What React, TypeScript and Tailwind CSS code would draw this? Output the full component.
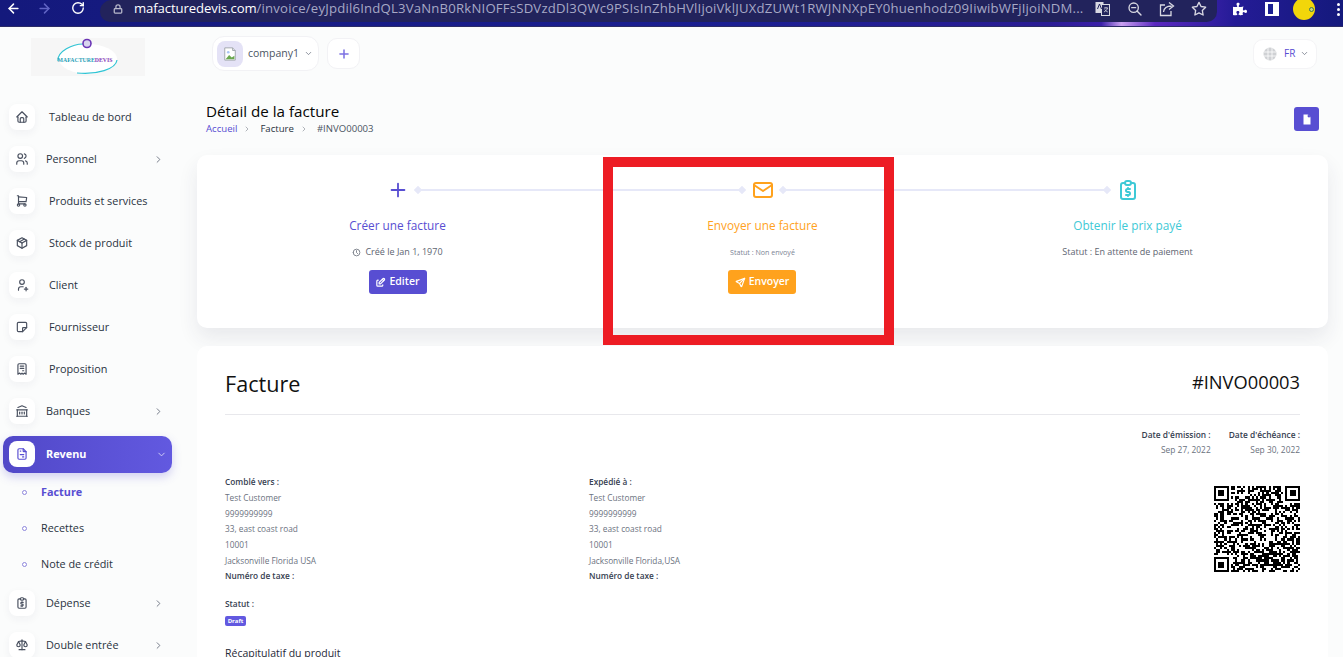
import React from "react";
import { ArrowLeft, ArrowRight, RotateCw, Lock, ChevronRight, ChevronDown } from "lucide-react";
import { FaPuzzlePiece } from "react-icons/fa";
import {
  TbHome, TbUsers, TbShoppingCart, TbPackage, TbUserPlus, TbNote, TbReceipt, TbBuildingBank,
  TbFileInvoice, TbReportMoney, TbScale, TbPlus, TbMail, TbSend, TbEdit, TbClock, TbZoomOut, TbStar,
} from "react-icons/tb";

const qrPath = (() => {
  const n = 41;
  let d = "";
  let s = 20221;
  const finder = (x: number, y: number) => x >= 0 && y >= 0 && x < 8 && y < 8;
  for (let y = 0; y < n; y++) {
    for (let x = 0; x < n; x++) {
      s = (s * 1103515245 + 12345) & 0x7fffffff;
      const inF = finder(x, y) || finder(n - 1 - x, y) || finder(x, n - 1 - y);
      if (!inF && (s >> 16) % 100 < 52) d += `M${x} ${y}h1v1h-1z`;
    }
  }
  for (const [a, b] of [[0, 0], [n - 7, 0], [0, n - 7]]) {
    d += `M${a} ${b}h7v7h-7zM${a + 1} ${b + 1}v5h5v-5zM${a + 2} ${b + 2}h3v3h-3z`;
  }
  return d;
})();

function Qr() {
  return (
    <svg width="86" height="86" viewBox="0 0 41 41" shapeRendering="crispEdges">
      <path d={qrPath} fill="#000" fillRule="evenodd" />
    </svg>
  );
}

function BrokenImage() {
  return (
    <svg width="14" height="14" viewBox="0 0 16 16">
      <path d="M2 1h9l3 3v11H2z" fill="#fff" stroke="#9aa0a6" strokeWidth="1" />
      <path d="M11 1v3h3" fill="#dfe1e5" stroke="#9aa0a6" strokeWidth="1" />
      <path d="M3 14l4-5 3 3 3-2v4z" fill="#6aa84f" />
      <circle cx="6" cy="6" r="1.5" fill="#a9c4f5" />
    </svg>
  );
}

function Logo() {
  return (
    <svg width="114" height="38" viewBox="0 0 114 38" className="bg-[#f6f6f6]">
      <ellipse cx="57" cy="21" rx="29" ry="15" fill="#fff" />
      <path d="M27 23C26 13 42 6 52 6" fill="none" stroke="#2fc4d4" strokeWidth="1.2" />
      <path d="M86 22C85 31 66 37 46 35" fill="none" stroke="#2fc4d4" strokeWidth="1.2" />
      <circle cx="56" cy="5.5" r="4" fill="#d8d4ee" stroke="#6a35b5" strokeWidth="1.6" />
      <text x="26.5" y="23.5" fontFamily="'Liberation Serif', serif" fontWeight="700" fontSize="5.8" fill="#2a9fb8">
        MAFACTURE<tspan fill="#8a3fb8">DEVIS</tspan>
      </text>
    </svg>
  );
}

function Globe() {
  return (
    <svg width="14" height="14" viewBox="0 0 14 14">
      <circle cx="7" cy="7" r="6.5" fill="#cfd1d4" />
      <path d="M1 5h12M1 9h12M5 1v12M9 1v12" stroke="#fff" strokeWidth="0.8" />
    </svg>
  );
}

function DocFilled() {
  return (
    <svg width="10" height="11" viewBox="0 0 10 11">
      <path d="M1.5 0.5h4.5l2.5 2.5v7.5h-7z" fill="#fff" />
      <path d="M6 0.5v2.5h2.5" fill="#584ed2" stroke="#584ed2" strokeWidth="0.6" />
    </svg>
  );
}

function Translate() {
  return (
    <svg width="15" height="15" viewBox="0 0 15 15">
      <rect x="0.5" y="1" width="8" height="11" fill="#d8d8e2" />
      <rect x="6.5" y="3.5" width="8" height="11" fill="#23245c" stroke="#d8d8e2" />
      <path d="M2.5 8l2-5 2 5" stroke="#23245c" fill="none" />
      <path d="M9 7h4M11 6v1M12.5 7c-.5 2-2 3-3.5 4M9.8 8.5c.6 1 1.6 2 3 2.5" stroke="#d8d8e2" strokeWidth=".8" fill="none" />
    </svg>
  );
}

function ShareBox() {
  return (
    <svg width="16" height="16" viewBox="0 0 16 16" fill="none" stroke="#d8d8e2" strokeWidth="1.3">
      <path d="M6 4H1.5v10.5H12V10" />
      <path d="M4.5 11c.5-4 3.5-6 8-6M10 1.5l4.5 3.5L10 8.5" />
    </svg>
  );
}

function ChromeBar() {
  return (
    <div className="flex h-[27px] shrink-0 overflow-hidden border-b border-[#2b2b66] bg-[linear-gradient(90deg,#14197c_0%,#1b1f92_55%,#2a1c94_78%,#3a1fa8_82%,#c9a0f0_83.5%,#5a28c0_86%,#241b96_92%,#14197c_100%)]">
      <div className="flex h-[16px] w-[100px] shrink-0 items-center text-white">
        <ArrowLeft size={15} strokeWidth={2.4} className="ml-[6px]" />
        <ArrowRight size={15} strokeWidth={2.4} className="ml-[16px] text-[#6064c4]" />
        <RotateCw size={14} strokeWidth={2.4} className="ml-[19px]" />
      </div>
      <div className="flex h-[22px] w-[1117px] shrink-0 items-center rounded-b-[14px] rounded-l-[16px] bg-[#22235c] pb-[5px]">
        <Lock size={10} strokeWidth={3} className="ml-[13px] text-[#b9bacb]" />
        <div className="ml-[11px] w-[953px] overflow-hidden whitespace-nowrap font-['Open_Sans',sans-serif] text-[13.15px] leading-[17px] tracking-[0.2px] text-[#a7a9c6]">
          <span className="tracking-[-0.1px] text-white">mafacturedevis.com</span>
          /invoice/eyJpdil6IndQL3VaNnB0RkNIOFFsSDVzdDl3QWc9PSIsInZhbHVlIjoiVklJUXdZUWt1RWJNNXpEY0huenhodz09IiwibWFjIjoiNDM...
        </div>
        <div className="ml-[8px] flex items-center text-[#d8d8e2]">
          <Translate />
          <TbZoomOut size={16} className="ml-[17px]" />
          <div className="ml-[16px]">
            <ShareBox />
          </div>
          <TbStar size={16} className="ml-[16px]" />
        </div>
      </div>
      <div className="flex h-[18px] flex-1 items-center text-white">
        <FaPuzzlePiece size={14} className="ml-[16px]" />
        <div className="ml-[18px] flex h-[14px] w-[14px] justify-start bg-white">
          <div className="ml-[3px] mt-[2px] h-[10px] w-[5px] bg-[#1b1f92]" />
        </div>
        <div className="ml-[14px] flex h-[22px] w-[22px] items-center justify-end rounded-full bg-[#f2d60a] pr-[1px]">
          <div className="h-[5px] w-[5px] rounded-full border border-[#3f7a4a] bg-[#c9d87a]" />
        </div>
        <div className="ml-[22px] flex flex-col gap-[2px]">
          <div className="h-[3px] w-[3px] rounded-full bg-white" />
          <div className="h-[3px] w-[3px] rounded-full bg-white" />
          <div className="h-[3px] w-[3px] rounded-full bg-white" />
        </div>
      </div>
    </div>
  );
}

function IconBox({ children, active }: { children: React.ReactNode; active?: boolean }) {
  return (
    <div
      className={`flex h-[26px] w-[26px] shrink-0 items-center justify-center rounded-[8px] bg-white ${
        active ? "text-[#584ed2]" : "text-[#4a5160] shadow-[0_3px_8px_rgba(30,40,80,0.05)]"
      }`}
    >
      {children}
    </div>
  );
}

function NavItem({ icon, label, chevron }: { icon: React.ReactNode; label: string; chevron?: boolean }) {
  return (
    <div className="flex h-[42px] items-center pl-[9px] text-[10.85px] text-[#293240]">
      <IconBox>{icon}</IconBox>
      <span className={chevron ? "ml-[11px]" : "ml-[14px]"}>{label}</span>
      {chevron && <ChevronRight size={11} className="absolute left-[153px] text-[#6b7280]" />}
    </div>
  );
}

function SubItem({ label, active }: { label: string; active?: boolean }) {
  return (
    <div className={`flex h-[36px] items-center pl-[22px] text-[10.85px] ${active ? "font-bold text-[#584ed2]" : "text-[#293240]"}`}>
      <div className="h-[5px] w-[5px] rounded-full border border-[#8d86dc] bg-white" />
      <span className="ml-[14px]">{label}</span>
    </div>
  );
}

function Sidebar() {
  return (
    <aside className="w-[197px] shrink-0">
      <div className="h-[69px] pl-[31px] pt-[11px]">
        <Logo />
      </div>
      <NavItem icon={<TbHome size={14} />} label="Tableau de bord" />
      <NavItem icon={<TbUsers size={14} />} label="Personnel" chevron />
      <NavItem icon={<TbShoppingCart size={14} />} label="Produits et services" />
      <NavItem icon={<TbPackage size={14} />} label="Stock de produit" />
      <NavItem icon={<TbUserPlus size={14} />} label="Client" />
      <NavItem icon={<TbNote size={14} />} label="Fournisseur" />
      <NavItem icon={<TbReceipt size={14} />} label="Proposition" />
      <NavItem icon={<TbBuildingBank size={14} />} label="Banques" chevron />
      <div className="flex h-[42px] items-center pt-[2px]">
        <div className="ml-[3px] flex h-[37px] w-[169px] items-center rounded-[10px] bg-[linear-gradient(90deg,#5148c8,#6259e0)] pl-[6px] text-[10.85px] font-bold text-white shadow-[0_4px_10px_rgba(88,78,210,0.25)]">
          <IconBox active>
            <TbFileInvoice size={14} />
          </IconBox>
          <span className="ml-[11px]">Revenu</span>
          <ChevronDown size={11} className="ml-[70px] text-[#d8d5f7]" />
        </div>
      </div>
      <SubItem label="Facture" active />
      <SubItem label="Recettes" />
      <SubItem label="Note de crédit" />
      <NavItem icon={<TbReportMoney size={14} />} label="Dépense" chevron />
      <NavItem icon={<TbScale size={14} />} label="Double entrée" chevron />
    </aside>
  );
}

function TopBar() {
  return (
    <div className="flex h-[53px] items-center pl-[15px] pr-[11px]">
      <div className="flex h-[35px] w-[107px] items-center rounded-[12px] border border-[#f2f2f5] bg-white pl-[4px]">
        <div className="flex h-[26px] w-[26px] items-center justify-center rounded-[8px] bg-[#e4e2f6]">
          <BrokenImage />
        </div>
        <span className="ml-[5px] text-[10.5px] text-[#4b5563]">company1</span>
        <ChevronDown size={9} className="ml-[5px] text-[#6b7280]" />
      </div>
      <div className="ml-[8px] flex h-[31px] w-[33px] items-center justify-center rounded-[10px] border border-[#f2f2f5] bg-white text-[#7c70e2]">
        <TbPlus size={14} strokeWidth={2.6} />
      </div>
      <div className="ml-auto flex h-[30px] w-[64px] items-center rounded-[10px] border border-[#f4f4f6] bg-white pl-[9px]">
        <Globe />
        <span className="ml-[7px] text-[10px] text-[#584ed2]">FR</span>
        <ChevronDown size={9} className="ml-[5px] text-[#6b7280]" />
      </div>
    </div>
  );
}

function PageHeader() {
  return (
    <div className="flex h-[75px] items-start pl-[9px] pr-[9px] pt-[21px]">
      <div>
        <h1 className="text-[15.2px] leading-[20px] text-[#060606]">Détail de la facture</h1>
        <div className="mt-[2px] flex h-[12px] items-center text-[9.6px] leading-[12px]">
          <span className="text-[#584ed2]">Accueil</span>
          <ChevronRight size={8} className="ml-[6px] text-[#8a8f98]" />
          <span className="ml-[9px] text-[#293240]">Facture</span>
          <ChevronRight size={8} className="ml-[6px] text-[#8a8f98]" />
          <span className="ml-[9px] text-[#4b5563]">#INVO00003</span>
        </div>
      </div>
      <div className="ml-auto mt-[6px] flex h-[24px] w-[25px] items-center justify-center rounded-[3px] bg-[#584ed2]">
        <DocFilled />
      </div>
    </div>
  );
}

function Step({
  icon, title, titleClass, status, button, line,
}: {
  icon: React.ReactNode; title: string; titleClass: string; status: React.ReactNode; button?: React.ReactNode; line?: boolean;
}) {
  return (
    <div className="relative flex flex-1 flex-col items-center pt-[23px]">
      <div className={`flex h-[24px] items-center ${titleClass}`}>{icon}</div>
      <div className={`mt-[15px] h-[16px] text-[11.8px] font-medium leading-[16px] ${titleClass}`}>{title}</div>
      <div className="mt-[12px] flex h-[14px] items-center text-[#5d6470]">{status}</div>
      {button && <div className="mt-[11px]">{button}</div>}
      {line && (
        <div className="absolute left-[calc(50%+19px)] top-[34px] h-[2px] w-[326px] bg-[#e6e8f8]">
          <div className="absolute -left-[2px] -top-[2px] h-[6px] w-[6px] rotate-45 bg-[#e6e8f8]" />
          <div className="absolute -right-[2px] -top-[2px] h-[6px] w-[6px] rotate-45 bg-[#e6e8f8]" />
        </div>
      )}
    </div>
  );
}

function StepsCard() {
  return (
    <div className="flex h-[173px] rounded-[10px] bg-white px-[18px] shadow-[0_10px_20px_rgba(40,45,80,0.09)]">
      <Step
        line
        icon={<TbPlus size={22} />}
        title="Créer une facture"
        titleClass="text-[#584ed2]"
        status={
          <span className="flex items-center text-[9px]">
            <TbClock size={9} className="mr-[4px]" />
            Créé le Jan 1, 1970
          </span>
        }
        button={
          <div className="flex h-[24px] w-[58px] items-center justify-center rounded-[3px] bg-[#584ed2] text-[10.5px] font-semibold text-white">
            <TbEdit size={11} strokeWidth={2.6} className="mr-[3px]" />
            Editer
          </div>
        }
      />
      <Step
        line
        icon={<TbMail size={24} />}
        title="Envoyer une facture"
        titleClass="text-[#ffa21d]"
        status={<span className="text-[7.1px] text-[#7b8494]">Statut : Non envoyé</span>}
        button={
          <div className="-ml-px flex h-[24px] w-[68px] items-center justify-center rounded-[3px] bg-[#ffa21d] text-[10.5px] font-semibold text-white">
            <TbSend size={11} strokeWidth={2.6} className="mr-[3px]" />
            Envoyer
          </div>
        }
      />
      <Step
        icon={<TbReportMoney size={24} />}
        title="Obtenir le prix payé"
        titleClass="text-[#3ec9d6]"
        status={<span className="text-[9px]">Statut : En attente de paiement</span>}
      />
    </div>
  );
}

function Address({ title, last }: { title: string; last: string }) {
  return (
    <div className="w-[364px] shrink-0 pt-[1px] text-[8.3px] leading-[15.7px] text-[#6b7280]">
      <div className="h-[16px] font-semibold text-[#374151]">{title}</div>
      <div>Test Customer</div>
      <div>9999999999</div>
      <div>33, east coast road</div>
      <div>10001</div>
      <div>{last}</div>
      <div className="-mt-px font-semibold text-[#374151]">Numéro de taxe :</div>
    </div>
  );
}

function InvoiceCard() {
  return (
    <div className="mt-[18px] h-[400px] rounded-[10px] bg-white px-[28px] pt-[23px]">
      <div className="flex h-[46px] items-start justify-between border-b border-[#e8e8ec]">
        <h2 className="text-[21.6px] font-medium leading-[30px] text-[#111]">Facture</h2>
        <span className="text-[18.3px] font-medium leading-[26px] text-[#111]">#INVO00003</span>
      </div>
      <div className="mt-[12px] flex justify-end gap-[18px] text-right text-[8.4px] leading-[15px]">
        <div>
          <div className="font-semibold text-[#374151]">Date d'émission :</div>
          <div className="text-[#6b7280]">Sep 27, 2022</div>
        </div>
        <div>
          <div className="font-semibold text-[#374151]">Date d'échéance :</div>
          <div className="text-[#6b7280]">Sep 30, 2022</div>
        </div>
      </div>
      <div className="mt-[16px] flex">
        <Address title="Comblé vers :" last="Jacksonville Florida USA" />
        <Address title="Expédié à :" last="Jacksonville Florida,USA" />
        <div className="flex flex-1 justify-end pt-[13px]">
          <Qr />
        </div>
      </div>
      <div className="mt-[13px] text-[8.3px] font-semibold leading-[15px] text-[#374151]">Statut :</div>
      <div className="mt-[5px] flex h-[10px] w-[21px] items-center justify-center rounded-[2px] bg-[#6259e0] text-[6px] font-bold text-white">
        Draft
      </div>
      <div className="mt-[19px] text-[10.5px] leading-[16px] text-[#1f2937]">Récapitulatif du produit</div>
    </div>
  );
}

export default function App() {
  return (
    <div className="relative flex h-[657px] flex-col overflow-hidden bg-[#fbfcfc] font-['Open_Sans',sans-serif]">
      <ChromeBar />
      <div className="flex min-h-0 flex-1">
        <Sidebar />
        <main className="min-w-0 flex-1 pr-[15px]">
          <TopBar />
          <PageHeader />
          <StepsCard />
          <InvoiceCard />
        </main>
      </div>
      <div className="absolute left-[603px] top-[157px] h-[188px] w-[291px] border-[10px] border-[#ed1c24]" />
    </div>
  );
}
